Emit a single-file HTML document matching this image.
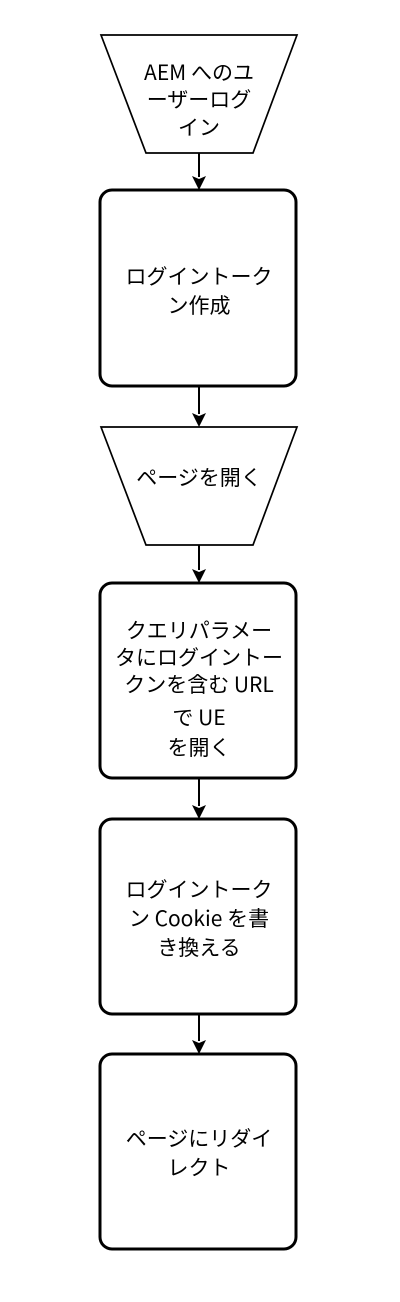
<!DOCTYPE html>
<html><head><meta charset="utf-8"><style>
html,body{margin:0;padding:0;background:#fff;width:400px;height:1302px;overflow:hidden}
text{font-family:"Noto Sans CJK JP",sans-serif;font-size:21px;fill:#000;text-anchor:middle}
</style></head><body>
<svg width="400" height="1302" viewBox="0 0 400 1302" xmlns="http://www.w3.org/2000/svg">
<g fill="#fff" stroke="#000">
<polygon points="101,35 297,35 253,153 146,153" stroke-width="1.7"/>
<polygon points="101,427 297,427 253,545 146,545" stroke-width="1.7"/>
<rect x="100" y="190" width="196" height="196" rx="12" stroke-width="3"/>
<rect x="100" y="583" width="196" height="195" rx="12" stroke-width="3"/>
<rect x="100" y="819" width="196" height="195" rx="12" stroke-width="3"/>
<rect x="100" y="1054" width="196" height="195" rx="12" stroke-width="3"/>
</g>
<g stroke="#000" stroke-width="2">
<line x1="199" y1="153" x2="199" y2="177"/>
<line x1="199" y1="387" x2="199" y2="414"/>
<line x1="199" y1="545" x2="199" y2="570"/>
<line x1="199" y1="779" x2="199" y2="806"/>
<line x1="199" y1="1015" x2="199" y2="1041"/>
</g>
<g fill="#000">
<path d="M192,176 L199,190 L206,176 L199,179 Z"/>
<path d="M192,413 L199,427 L206,413 L199,416 Z"/>
<path d="M192,569 L199,583 L206,569 L199,572 Z"/>
<path d="M192,805 L199,819 L206,805 L199,808 Z"/>
<path d="M192,1040 L199,1054 L206,1040 L199,1043 Z"/>
</g>
<text x="199" y="80">AEM へのユ</text>
<text x="199" y="107">ーザーログ</text>
<text x="199" y="135">イン</text>
<text x="199" y="284">ログイントーク</text>
<text x="199" y="313">ン作成</text>
<text x="199" y="485">ページを開く</text>
<text x="199" y="638">クエリパラメー</text>
<text x="199" y="665">タにログイントー</text>
<text x="199" y="692">クンを含む URL</text>
<text x="199" y="725">で UE</text>
<text x="199" y="755">を開く</text>
<text x="199" y="897">ログイントーク</text>
<text x="199" y="926">ン Cookie を書</text>
<text x="199" y="955">き換える</text>
<text x="199" y="1146">ページにリダイ</text>
<text x="199" y="1175">レクト</text>
</svg>
</body></html>
